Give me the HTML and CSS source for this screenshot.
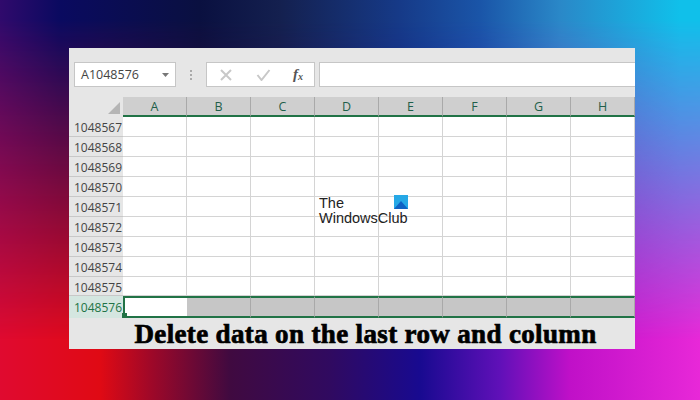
FILE: index.html
```html
<!DOCTYPE html>
<html lang="en">
<head>
    <meta charset="UTF-8">
    <title>Delete data on the last row and column</title>
    <link rel="stylesheet" href="styles.css">
</head>
<body>
    <div class="window">
        <div class="toolbar">
            <div class="namebox">
                <span>A1048576</span>
                <svg width="7" height="4" viewBox="0 0 7 4"><path d="M0 0h7L3.500 4z" fill="#777"/></svg>
            </div>
            <div class="dots"><i></i><i></i><i></i></div>
            <div class="fxbox">
                <svg width="14" height="12" viewBox="0 0 14 12"><path d="M2 1l10 10M12 1L2 11" stroke="#c8c8c8" stroke-width="2" fill="none"/></svg>
                <svg width="15" height="12" viewBox="0 0 15 12"><path d="M1.500 6l4 5 8-10" stroke="#c8c8c8" stroke-width="2" fill="none"/></svg>
                <span class="fx">f<sub>x</sub></span>
            </div>
            <div class="formula"></div>
        </div>
        <div class="sheet">
            <div class="corner"><div class="triangle"></div></div>
            <div class="colhead">A</div>
            <div class="colhead">B</div>
            <div class="colhead">C</div>
            <div class="colhead">D</div>
            <div class="colhead">E</div>
            <div class="colhead">F</div>
            <div class="colhead">G</div>
            <div class="colhead">H</div>

            <div class="rowhead">1048567</div>
            <div class="cell"></div><div class="cell"></div><div class="cell"></div><div class="cell"></div><div class="cell"></div><div class="cell"></div><div class="cell"></div><div class="cell"></div>
            <div class="rowhead">1048568</div>
            <div class="cell"></div><div class="cell"></div><div class="cell"></div><div class="cell"></div><div class="cell"></div><div class="cell"></div><div class="cell"></div><div class="cell"></div>
            <div class="rowhead">1048569</div>
            <div class="cell"></div><div class="cell"></div><div class="cell"></div><div class="cell"></div><div class="cell"></div><div class="cell"></div><div class="cell"></div><div class="cell"></div>
            <div class="rowhead">1048570</div>
            <div class="cell"></div><div class="cell"></div><div class="cell"></div><div class="cell"></div><div class="cell"></div><div class="cell"></div><div class="cell"></div><div class="cell"></div>
            <div class="rowhead">1048571</div>
            <div class="cell"></div><div class="cell"></div><div class="cell"></div><div class="cell"></div><div class="cell"></div><div class="cell"></div><div class="cell"></div><div class="cell"></div>
            <div class="rowhead">1048572</div>
            <div class="cell"></div><div class="cell"></div><div class="cell"></div><div class="cell"></div><div class="cell"></div><div class="cell"></div><div class="cell"></div><div class="cell"></div>
            <div class="rowhead">1048573</div>
            <div class="cell"></div><div class="cell"></div><div class="cell"></div><div class="cell"></div><div class="cell"></div><div class="cell"></div><div class="cell"></div><div class="cell"></div>
            <div class="rowhead">1048574</div>
            <div class="cell"></div><div class="cell"></div><div class="cell"></div><div class="cell"></div><div class="cell"></div><div class="cell"></div><div class="cell"></div><div class="cell"></div>
            <div class="rowhead">1048575</div>
            <div class="cell"></div><div class="cell"></div><div class="cell"></div><div class="cell"></div><div class="cell"></div><div class="cell"></div><div class="cell"></div><div class="cell"></div>
            <div class="rowhead active">1048576</div>
            <div class="cell picked first"></div><div class="cell picked"></div><div class="cell picked"></div><div class="cell picked"></div><div class="cell picked"></div><div class="cell picked"></div><div class="cell picked"></div><div class="cell picked"></div>

            <div class="handle"></div>
            <div class="logo">
                <span>The<br>WindowsClub</span>
                <svg class="logo-mark" width="14" height="14" viewBox="0 0 14 14"><rect width="14" height="14" fill="#25a8e6"/><path d="M0 14L7 6l7 8z" fill="#0f62c4"/></svg>
            </div>
        </div>
        <div class="caption">Delete data on the last row and column</div>
    </div>
</body>
</html>
```

FILE: styles.css
```css
body {
    margin: 0;
    height: 400px;
    overflow: hidden;
    font-family: "Open Sans", "Liberation Sans", sans-serif;
    padding: 48px 65px 0 69px;
    box-sizing: border-box;
    background: linear-gradient(90deg, #e00a30 0, #e00a14 100px, #a00828 150px, #400a40 230px, #300a60 330px, #180a90 420px, #6010b8 500px, #c010c8 570px, #e828d8 700px);
}
/* top half of the wallpaper, faded out over the bottom colours */
body::before {
    content: "";
    position: absolute;
    left: 0;
    top: 0;
    width: 700px;
    height: 400px;
    background: linear-gradient(90deg, #300a6c 0, #0a0a60 60px, #0a1040 200px, #14204f 280px, #163a88 400px, #1a55a8 480px, #2a88c8 560px, #10c0ea 680px);
    -webkit-mask-image: linear-gradient(to bottom, #000 5%, transparent 85%);
    mask-image: linear-gradient(to bottom, #000 5%, transparent 85%);
}
.window {
    position: relative;
    width: 566px;
    height: 301px;
    background: #e6e6e6;
}
.toolbar {
    display: flex;
    align-items: center;
    height: 49px;
    padding: 13px 0 9px 5px;
    box-sizing: border-box;
}
.namebox {
    width: 102px;
    height: 25px;
    box-sizing: border-box;
    background: #fff;
    border: 1px solid #c6c6c6;
    display: flex;
    align-items: center;
    justify-content: space-between;
    padding: 0 6px 0 6px;
    font-size: 12.5px;
    color: #444;
}
.dots {
    width: 30px;
    display: flex;
    flex-direction: column;
    align-items: center;
    gap: 2px;
}
.dots i {
    width: 2px;
    height: 2px;
    background: #aaa;
}
.fxbox {
    width: 109px;
    height: 25px;
    box-sizing: border-box;
    background: #fff;
    border: 1px solid #c6c6c6;
    display: flex;
    align-items: center;
    justify-content: space-between;
    padding: 0 11px 0 12px;
}
.fx {
    font-family: "Liberation Serif", serif;
    font-style: italic;
    font-weight: bold;
    font-size: 15px;
    line-height: 15px;
    color: #555;
}
.fx sub {
    font-size: 10px;
    line-height: 0;
    vertical-align: -1px;
}
.formula {
    flex: 1;
    height: 25px;
    margin-left: 4px;
    box-sizing: border-box;
    background: #fff;
    border: 1px solid #c6c6c6;
    border-right: none;
}
.sheet {
    position: relative;
    display: grid;
    grid-template-columns: 54px repeat(8, 64px);
    grid-template-rows: 20px repeat(8, 20px) 19px 22px;
    width: 566px;
    overflow: hidden;
}
.corner {
    display: flex;
    justify-content: flex-end;
    align-items: flex-end;
    padding: 0 3px 3px 0;
}
.triangle {
    width: 0;
    height: 0;
    border-style: solid;
    border-width: 0 0 12px 12px;
    border-color: transparent transparent #b5b5b5 transparent;
}
.colhead {
    background: #cfcfcf;
    border-right: 1px solid #a9a9a9;
    border-bottom: 2px solid #217346;
    box-sizing: border-box;
    text-align: center;
    font-size: 12.5px;
    line-height: 19px;
    color: #1f5f4a;
}
.rowhead {
    box-sizing: border-box;
    border-bottom: 1px solid #c8c8c8;
    font-size: 12px;
    line-height: 21px;
    color: #444;
    text-align: right;
    padding-right: 1px;
    white-space: nowrap;
}
.rowhead.active {
    color: #217346;
    background: #d4e6e0;
    border-bottom: none;
    line-height: 23px;
}
.cell {
    background: #fff;
    box-sizing: border-box;
    border-right: 1px solid #d4d4d4;
    border-bottom: 1px solid #d4d4d4;
}
.cell.picked {
    background: #c6c6c6;
    border-right: 1px solid #a9a9a9;
    border-top: 2px solid #217346;
    border-bottom: 2px solid #217346;
}
.cell.first {
    background: #fff;
    border-left: 2px solid #217346;
    border-right: none;
}
.handle {
    position: absolute;
    left: 53px;
    bottom: 0;
    width: 5px;
    height: 5px;
    background: #217346;
}
.logo {
    position: absolute;
    left: 250px;
    top: 99px;
    font-family: "Liberation Sans", sans-serif;
    font-size: 14.500px;
    line-height: 15px;
    color: #222;
}
.logo-mark {
    position: absolute;
    left: 75px;
    top: -1px;
}
.caption {
    height: 31px;
    box-sizing: border-box;
    text-align: center;
    font-family: "Liberation Serif", serif;
    font-weight: bold;
    font-size: 27px;
    line-height: 32px;
    letter-spacing: 0.35px;
    color: #000;
    -webkit-text-stroke: 0.7px #000;
    padding-left: 27px;
    white-space: nowrap;
}
```
